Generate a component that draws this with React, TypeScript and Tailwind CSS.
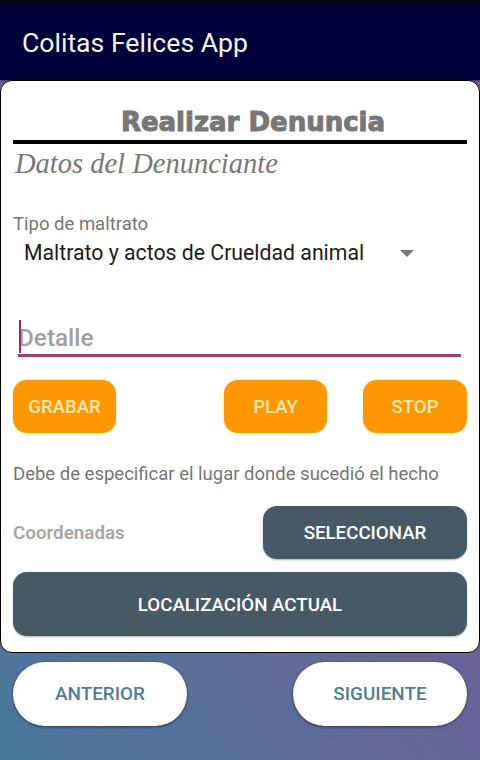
const orangeBtn = "h-[53px] w-[103px] rounded-[14px] bg-[#ff9800] pt-[3px] text-[18.6px] font-medium text-[#ffe9b8] shadow-[0_0_2px_#ffd98a]";
const darkBtn = "rounded-[14px] bg-[#455a64] pt-[2px] text-[18.7px] font-medium text-white shadow-[0_1px_2px_rgba(0,0,0,0.3)]";
const pillBtn = "h-[64px] w-[174px] rounded-full bg-white text-[18.9px] font-medium text-[#4f7f93] shadow-[0_1px_3px_rgba(0,0,0,0.5)]";

export default function App() {
  return (
    <div className="flex h-[760px] w-[480px] flex-col overflow-hidden bg-gradient-to-tr from-[#47789a] to-[#7a4f96] font-['Roboto',sans-serif]">
      <header className="flex h-[80px] shrink-0 items-center bg-[#00003a] bg-gradient-to-b from-[#000010] to-[#00003a] to-[12%] pl-[22px] pt-[5px] shadow-[0_1px_2px_rgba(0,0,0,0.4)]">
        <h1 className="text-[26.6px] font-normal text-[#f4f4f8]">Colitas Felices App</h1>
      </header>

      <main className="flex h-[573px] shrink-0 flex-col rounded-[12px] border border-black bg-white px-[12px]">
        <h2 className="mt-[23px] h-[36px] pl-[26px] text-center font-['DejaVu_Sans',sans-serif] text-[26px] leading-[36px] font-bold whitespace-nowrap text-[#777777] [-webkit-text-stroke:1px_#777777]">
          Realizar Denuncia
        </h2>
        <div className="h-[4px] bg-black" />
        <p className="h-[40px] pl-[2px] font-['Liberation_Serif',cursive] text-[28.5px] leading-[40px] text-[#777777] italic">
          Datos del Denunciante
        </p>

        <label className="mt-[30px] text-[18.5px] leading-[20px] text-[#757575]">Tipo de maltrato</label>
        <div className="mt-[4px] flex h-[30px] items-center justify-between pr-[53px] pl-[11px]">
          <span className="text-[21.25px] text-[#1c1c1c]">Maltrato y actos de Crueldad animal</span>
          <span className="h-0 w-0 border-x-[7px] border-t-[7px] border-x-transparent border-t-[#777777]" />
        </div>

        <div className="relative mt-[49px] ml-[5px] mr-[6px] flex h-[40px] items-center border-b-[3px] border-[#a83a72] pt-[6px]">
          <span className="absolute top-[3px] left-[1px] h-[33px] w-[2px] bg-[#a02860]" />
          <span className="text-[24.3px] font-medium text-[#a0a0a0]">Detalle</span>
        </div>

        <div className="mt-[23px] flex items-center gap-[36px]">
          <button className={orangeBtn + " mr-[72px]"}>GRABAR</button>
          <button className={orangeBtn}>PLAY</button>
          <button className={orangeBtn + " w-[104px]"}>STOP</button>
        </div>

        <p className="mt-[30px] h-[22px] text-[18.5px] leading-[22px] whitespace-nowrap text-[#757575]">
          Debe de especificar el lugar donde sucedió el hecho
        </p>

        <div className="mt-[21px] flex items-center justify-between">
          <span className="pt-[2px] text-[18.8px] font-semibold text-[#a6a6a6]">Coordenadas</span>
          <button className={darkBtn + " h-[53px] w-[204px]"}>SELECCIONAR</button>
        </div>

        <button className={darkBtn + " mt-[13px] h-[64px] w-full"}>LOCALIZACIÓN ACTUAL</button>
      </main>

      <footer className="mt-[9px] flex justify-between px-[13px]">
        <button className={pillBtn}>ANTERIOR</button>
        <button className={pillBtn}>SIGUIENTE</button>
      </footer>
    </div>
  );
}
